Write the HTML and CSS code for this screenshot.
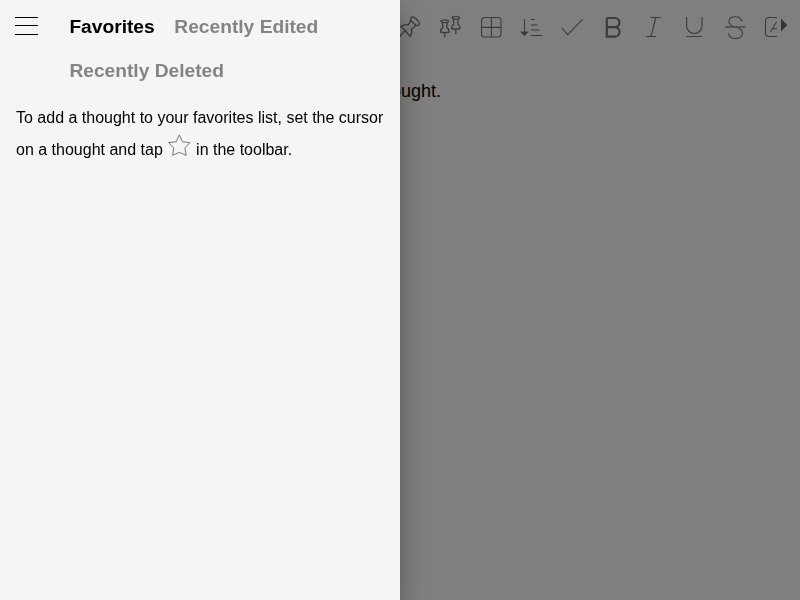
FILE: index.html
```html
<!DOCTYPE html>
<html lang="en">
<head>
<meta charset="utf-8">
<title>Favorites</title>
<link rel="stylesheet" href="styles.css">
</head>
<body>
<main class="app">
  <div class="toolbar">
    <svg class="pins" width="41" height="54" viewBox="389 0 41 54"><ellipse cx="415" cy="21.3" rx="5.3" ry="2.5" transform="rotate(45 415 21.3)"/><path d="M411 20.2 408.3 24.8Q404.5 23.8 400.8 26.6Q406 30.5 410 36.3Q412.6 33 411.4 29.2L416 25.2M405 31 399 37"/></svg>
    <svg class="pins" width="41" height="54" viewBox="430 0 41 54"><g id="pin"><ellipse cx="444.8" cy="21.2" rx="3.8" ry="1.4"/><path d="M442.3 22.6 442.9 27.4Q440.6 28.8 440.5 32Q444.8 33.2 449.1 32Q449 28.8 446.7 27.4L447.3 22.6M444.8 32.5V37.5"/></g><use href="#pin" x="11" y="-3.5"/></svg>
    <svg width="40" height="54" viewBox="471 0 40 54"><rect x="481.5" y="17.5" width="19.5" height="19.5" rx="3"/><path d="M491.4 17.5V37M481.5 27.4H501"/></svg>
    <svg width="41" height="54" viewBox="511 0 41 54"><path d="M524.5 19V34M531 19.5H534.8M531 35.5H542"/><path class="strike" d="M531 25H537.5M531 30H539.5"/><path class="solid" d="M521.3 32H527.7L524.5 35.4Z"/></svg>
    <svg width="41" height="54" viewBox="552 0 41 54"><path d="M562 28.2 567.7 34.6 582.6 19.4"/></svg>
    <svg width="40" height="54" viewBox="593 0 40 54"><path class="bold" d="M606.8 18H614.8A4.6 4.6 0 0 1 614.8 27.2H606.8M614.8 27.2A4.6 4.6 0 0 1 614.8 36.6H606.8V18"/></svg>
    <svg width="41" height="54" viewBox="633 0 41 54"><path d="M650.7 17.5H660.7M646 36.5H656M655.8 17.5 651 36.5"/></svg>
    <svg width="41" height="54" viewBox="674 0 41 54"><path d="M686.6 17V25.8A7.7 7.7 0 0 0 702 25.8V17M686.3 36.5H702.3"/></svg>
    <svg width="41" height="54" viewBox="715 0 41 54"><path d="M742 21.5C741 18.5 738.8 16.8 735.4 16.8C731.5 16.8 729 18.8 729 21.7C729 25.2 732 26.2 735.5 27C739.5 28 742.4 29.5 742.4 33C742.4 36.4 739.5 38.6 735.6 38.6C731.5 38.6 728.8 36.4 728.3 33.2"/><path class="strike" d="M725 27H745.7"/></svg>
    <svg width="44" height="54" viewBox="756 0 44 54"><path d="M777 17.5H769Q765.5 17.5 765.5 21V33Q765.5 36.5 769 36.5H777M770.4 32 776.3 22.3H777M772.3 28.7H777"/><path class="arrow" d="M781 18.5 787.2 25 781 31.5Z"/></svg>
  </div>
  <p class="thought">ought.</p>
</main>
<div class="backdrop"></div>
<aside class="drawer">
  <header class="header">
    <svg class="menu" width="24" height="20" viewBox="0 0 24 20"><path d="M0 1.5H23M0 9.5H23M0 18.5H23"/></svg>
    <nav class="tabs"><a class="active">Favorites</a><a>Recently Edited</a><a>Recently Deleted</a></nav>
  </header>
  <p class="hint">To add a thought to your favorites list, set the cursor on a thought and tap <svg class="star" width="24" height="24" viewBox="0 0.6 24 24"><path d="M12.3 1.5 15.4 8.4 22.9 9.2 17.9 14.6 19.2 22 12.3 18.9 5.6 22 6.7 14.6 1.6 9.2 9.2 8.4Z"/></svg> in the toolbar.</p>
</aside>
</body>
</html>
```

FILE: styles.css
```css
body {
  margin: 0;
  height: 600px;
  overflow: hidden;
  background: #fff;
  color: #000;
  font-family: "Liberation Sans", Arial, sans-serif;
}
svg {
  fill: none;
  stroke: #000;
  stroke-width: 1;
}
.app {
  height: 600px;
}
.toolbar {
  display: flex;
  height: 54px;
  padding-left: 389px;
}
.toolbar svg {
  flex: none;
  stroke: #777;
  stroke-width: 1.1;
}
.toolbar .pins {
  stroke-width: 1.3;
}
.toolbar .solid {
  fill: #777;
}
.toolbar .bold {
  stroke-width: 2.2;
}
.toolbar .strike {
  stroke-width: 1.6;
  stroke: #999;
}
.toolbar .arrow {
  fill: #666;
  stroke: none;
}
.thought {
  margin: 26px 0 0 391px;
  font-size: 18px;
  line-height: 22px;
}
.backdrop {
  position: fixed;
  inset: 0;
  background: rgba(0, 0, 0, 0.5);
}
.drawer {
  position: fixed;
  inset: 0 auto 0 0;
  width: 400px;
  background: #f5f5f5;
  box-shadow: 0 8px 10px -5px rgba(0, 0, 0, 0.2), 0 16px 24px 2px rgba(0, 0, 0, 0.14), 0 6px 30px 5px rgba(0, 0, 0, 0.12);
}
.header {
  display: flex;
  align-items: flex-start;
  padding: 5px 0 0 15px;
}
.menu {
  flex: none;
  margin: 11px 30.4px 0 0;
}
.tabs {
  display: flex;
  flex-wrap: wrap;
  column-gap: 19.6px;
  font-size: 19.2px;
  font-weight: bold;
  line-height: 44px;
  color: #848484;
}
.tabs .active {
  color: #000;
}
.hint {
  margin: 9px 16px 0;
  font-size: 16px;
  line-height: 32px;
}
.star {
  margin: 0 0.4px 0 0;
  vertical-align: -3px;
  stroke: #777;
}
```
